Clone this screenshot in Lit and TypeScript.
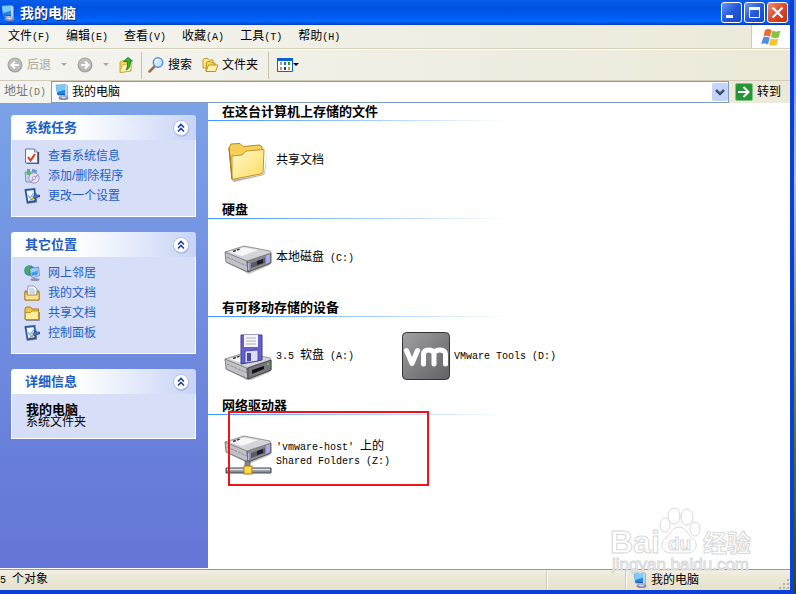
import { LitElement, html, svg, css, TemplateResult } from "lit";
import { customElement, property } from "lit/decorators.js";

/* Latin runs use a half-width monospace face next to the full-width CJK glyphs. */
const mixed = (s: string) =>
  s.split(/([\x20-\x7e]+)/).filter(Boolean).map((p) =>
    /^[\x20-\x7e]+$/.test(p) ? html`<span class="lat">${p}</span>` : p);

const mixedStyles = css`
  .lat {
    font-family: "Liberation Mono", monospace;
    font-size: 10px;
    white-space: pre;
  }
`;

const computer = svg`
  <ellipse cx="9.500" cy="14" rx="5" ry="2" fill="#8488ac"/>
  <path d="M5 13l4-1.500 5 1-4 2.500z" fill="#dcdff0" stroke="#8c90b4" stroke-width=".6"/>
  <path d="M2 1L11.500.5l2 1.200v10L10 12.500 3.500 11z" fill="#c4d0ea" stroke="#7c8cb8" stroke-width=".6"/>
  <path d="M2 1.200L11 .8v10.400L3.500 10.500z" fill="#2288e8"/>
  <path d="M2 1.200L11 .8v5L3 8z" fill="#78ccfc"/>
  <path d="M3 9.500l8 .5v1.200L3.500 10.500z" fill="#0e5cc0"/>`;

const control = svg`
  <path d="M3 15l9-1 .5-3" fill="none" stroke="#7c8498" stroke-width="1.500"/>
  <path d="M1.500 2l9-1 1 12-8 1.500z" fill="#f4f8ff" stroke="#28599c" stroke-width="1.800"/>
  <path d="M4 7l2 3 3.500-5" fill="none" stroke="#7fb0e0" stroke-width="1.300"/>
  <path d="M9 8.500l3-3 .5 2 3-.5v2l-3 .5-1 2z" fill="#3c78c4" stroke="#173a70" stroke-width=".7"/>
  <path d="M9.500 9l-4 3.500 4-1.500z" fill="#f0b030" stroke="#6a4c10" stroke-width=".4"/>`;

const drive = svg`
  <path d="M2 24L24 36 46 28 46 31 25 40 3 29z" fill="#000" opacity=".25"/>
  <path d="M1 18L23 27 24 38 2 28z" fill="#c2c2c6" stroke="#66666c" stroke-width=".8"/>
  <path d="M23 27L47 19V29L24 38z" fill="#8a8a92" stroke="#444444" stroke-width=".8"/>
  <path d="M27 29l14-5v5l-14 5z" fill="#5a5a64"/><path d="M33 27l6-2v4l-6 2z" fill="#202024"/>
  <path d="M42 21.500l4-1.500v8L42 30z" fill="#a9a9ee"/>
  <path d="M24.500 29v7" stroke="#b5b5f4" stroke-width="1.500"/>
  <path d="M1 18L20 12 46 17 47 19 23 27z" fill="#d4d4d8" stroke="#808086" stroke-width=".8"/>
  <path d="M5 18L20 13.500 34 16 18 22z" fill="#f6f6f6"/>
  <path d="M9 17.500l7-2.500" stroke="#333" stroke-width="1.500" stroke-dasharray="3 1"/>
  <path d="M3 23l20 9" stroke="#8e8e94" stroke-dasharray="3 1"/>`;

const icons: Record<string, { box: string; art: TemplateResult | unknown }> = {
  computer: { box: "0 0 16 16", art: computer },
  control: { box: "0 0 16 16", art: control },
  info: { box: "0 0 16 16", art: svg`
    <path d="M3 15.500h11.500V4" fill="none" stroke="#4a4a58" stroke-width="1.200"/>
    <path d="M1.500 1h9L13.500 4v11h-12z" fill="#f6faff" stroke="#5878b0"/>
    <path d="M10.500 1v3h3" fill="#bcd0ee" stroke="#5878b0" stroke-width=".7"/>
    <path d="M4 9l2.500 3.500L11 6" fill="none" stroke="#e0381c" stroke-width="2"/>` },
  programs: { box: "0 0 16 16", art: svg`
    <path d="M3 1h3v3H3zM8 1l5 1-1 4-4-1z" fill="#5d9ed8"/>
    <path d="M1 4h11v10H2z" fill="#c3d6ee" stroke="#6685b8" stroke-width=".8"/>
    <path d="M2 4h5v3H3z" fill="#60b868"/>
    <circle cx="10" cy="10" r="5.200" fill="#e5dff5" stroke="#8c8cb0" stroke-width=".8"/>
    <path d="M10 10l4-3M10 10l-3 4" stroke="#b098dc" stroke-width="1.500"/>
    <circle cx="10" cy="10" r="1.500" fill="#fff" stroke="#777799" stroke-width=".6"/>` },
  network: { box: "0 0 16 16", art: svg`
    <circle cx="5.500" cy="5.500" r="5.300" fill="#2f7ed8"/>
    <path d="M2 2c3-2 5-1 5 1L5 5l1 3-2 2C1 8 0 5 2 2z" fill="#43b04a"/>
    <ellipse cx="11" cy="14.500" rx="4.500" ry="1.500" fill="#8a8fae"/>
    <path d="M6 3.500L14.500 2l1 8.500L9 12.500 6.500 11z" fill="#dfe7f8" stroke="#52689c" stroke-width=".7"/>
    <path d="M6.800 4.200L13.800 3v7L7.500 11z" fill="#3a9cf0"/><path d="M6.800 4.200L13.800 3v2.500L7 8z" fill="#8cd2fc"/>` },
  documents: { box: "0 0 16 16", art: svg`
    <path d="M1 6h14v9H1z" fill="#f0c850" stroke="#a87818"/>
    <path d="M4 1h6l3 3v8H3z" fill="#fff" stroke="#6888b8" stroke-width=".8"/>
    <path d="M5 4h5M5 6h6M5 8h6" stroke="#78a0d0" stroke-width=".8"/>
    <path d="M1 7h2v3h10V7h2v8H1z" fill="#fbe592" stroke="#a87818" stroke-width=".9"/>` },
  folder: { box: "0 0 16 16", art: svg`
    <path d="M2 15.500h13.500V7" fill="none" stroke="#8c8c9c"/>
    <path d="M1 4l1-2h4.500L8 4h6.500v10.500H1z" fill="#f0c548" stroke="#a87a18"/>
    <path d="M1.500 7.500h5L8 6h6.500v8.500h-13z" fill="#fdec9a" stroke="#b08320" stroke-width=".8"/>` },
  folders: { box: "0 0 16 16", art: svg`
    <path d="M1 3l1-1.500h4L7.500 3H11v8H1z" fill="#fce88c" stroke="#c09020" stroke-width=".9"/>
    <path d="M4.500 6l1-1.500h3L10 6h3v8H4z" fill="#f8d860" stroke="#b88818" stroke-width=".9"/>
    <path d="M6.500 8H16l-2.500 6.500H4z" fill="#fff2a8" stroke="#b88818" stroke-width=".9"/>` },
  up: { box: "0 0 16 16", art: svg`
    <path d="M1 5l4-2 1.500 1.500H12V14L1 15.500z" fill="#f6d860" stroke="#c09828" stroke-width=".8"/>
    <path d="M3 8l10-2-1.500 8L1 15.500z" fill="#fff3ac" stroke="#c8a030" stroke-width=".7"/>
    <path d="M4.500 4.500L9 .5l4.500 3.500-2.300.3c.5 4-.8 7.700-4.200 8.700 1.500-2.500 1.800-5 1.300-8.300z" fill="#38b030" stroke="#15701a" stroke-width=".8"/>` },
  search: { box: "0 0 16 16", art: svg`
    <path d="M7 9L1.500 14.500" stroke="#a86848" stroke-width="2.500" stroke-linecap="round"/>
    <circle cx="10" cy="5.500" r="4.700" fill="#cbe8ff" stroke="#5a8edc" stroke-width="1.500"/>
    <path d="M7.500 5c.3-1.800 1.500-2.500 3-2.500" fill="none" stroke="#fff" stroke-width="1.500"/>` },
  back: { box: "0 0 16 16", art: svg`
    <circle cx="8" cy="8" r="7.500" fill="#a4a4a0"/><circle cx="8" cy="7.500" r="6.300" fill="#bcbcb8"/>
    <path d="M12 8H5M8 4.500L4.500 8 8 11.500" fill="none" stroke="#fff" stroke-width="2"/>` },
  forward: { box: "0 0 16 16", art: svg`
    <circle cx="8" cy="8" r="7.500" fill="#a4a4a0"/><circle cx="8" cy="7.500" r="6.300" fill="#bcbcb8"/>
    <path d="M4 8h7M8 4.500L11.500 8 8 11.500" fill="none" stroke="#fff" stroke-width="2"/>` },
  views: { box: "0 0 16 16", art: svg`
    <path d="M.5 1.500h15v13H.5z" fill="#fff" stroke="#0b62c8"/><path d="M0 1h16v3H0z" fill="#0b62c8"/>
    <path d="M3 5h2v3H3z" fill="#9098d0"/><path d="M7 5h2v3H7z" fill="#1078e0"/><path d="M11 5h2v3h-2z" fill="#18a020"/>
    <path d="M3 10h2v3H3z" fill="#f07850"/><path d="M7 10h2v3H7z" fill="#183898"/><path d="M11 10h2v3h-2z" fill="#d0a010"/>` },
  caret: { box: "0 0 6 4", art: svg`<path d="M0 0h6L3 3z" fill="currentColor"/>` },
  go: { box: "0 0 18 18", art: svg`
    <rect x=".5" y=".5" width="17" height="17" rx="1.500" fill="#259632" stroke="#7cc488"/>
    <path d="M3 9h10M8.500 4l5 5-5 5" fill="none" stroke="#fff" stroke-width="2"/>` },
  down: { box: "0 0 16 18", art: svg`
    <rect x="0" y="0" width="16" height="18" rx="2" fill="#c4d3fa"/>
    <path d="M4 7l4 4 4-4" fill="none" stroke="#3f5378" stroke-width="2.500"/>` },
  flag: { box: "0 0 20 18", art: svg`
    <path d="M4 2c2-1.500 4-1.500 6.500 0L9 9C6.500 7.500 4.500 7.500 2.500 8.500z" fill="#ee6a30"/>
    <path d="M11.500 2.500c2 1 5 1.500 8 0L17.500 9.500c-3 1-5 .8-7.500-.5z" fill="#86c440"/>
    <path d="M2.200 9.500c2-1 4-1 6.500.3L7 16.500C5 15.300 3 15 .3 16.200z" fill="#4a90e0"/>
    <path d="M9.800 10.200c2.500 1.300 4.800 1.300 7.500.4L15.500 17c-2.500 1.200-5 .8-7.500-.3z" fill="#f8c430"/>` },
  min: { box: "0 0 21 21", art: svg`<path d="M5 13h7v3H5z" fill="#fff"/>` },
  max: { box: "0 0 21 21", art: svg`<path d="M5.500 5.500h10v10h-10z" fill="none" stroke="#fff"/><path d="M5 5h11v3H5z" fill="#fff"/>` },
  close: { box: "0 0 21 21", art: svg`<path d="M5.500 5.500l10 10M15.500 5.500l-10 10" stroke="#fff" stroke-width="2.200"/>` },
  collapse: { box: "0 0 18 18", art: svg`
    <circle cx="9.500" cy="10" r="7.800" fill="#8e9cc8" opacity=".6"/>
    <circle cx="9" cy="9" r="7.500" fill="#fff" stroke="#b4c2e4"/>
    <path d="M6 8.500l3-3 3 3M6 12.500l3-3 3 3" fill="none" stroke="#1c409c" stroke-width="1.600"/>` },
  grip: { box: "0 0 12 12", art: svg`
    <path d="M9 1h2v2H9zM5 5h2v2H5zM9 5h2v2H9zM1 9h2v2H1zM5 9h2v2H5zM9 9h2v2H9z" fill="#b4b09c"/>` },
  bigFolder: { box: "0 0 48 48", art: svg`
    <path d="M8 44L41 38 43 15l-3 24-30 7z" fill="#000" opacity=".3"/>
    <defs><linearGradient id="f" x2="1" y2="1"><stop stop-color="#fffbd0"/><stop offset="1" stop-color="#ffd95a"/></linearGradient></defs>
    <path d="M5 12l2-4 9-.5 3 3 17-1.500 2 2V36L8 43z" fill="#f5cf58" stroke="#b48a20"/>
    <path d="M8 20l10-1 4-4 18-1.500-1 24L8 43.500z" fill="url(#f)" stroke="#c09428"/>
    <path d="M5 12l3 31" stroke="#a87c18" stroke-width="1.200"/>` },
  drive: { box: "0 0 48 48", art: drive },
  floppy: { box: "0 0 48 48", art: svg`
    <g transform="translate(0 9)">${drive}</g>
    <path d="M24 36L47 28V38L24 47z" fill="#77777e" stroke="#444444" stroke-width=".8"/>
    <path d="M28 38l12-4v3l-12 5z" fill="#111"/><path d="M43 31h2v2h-2z" fill="#40d850"/>
    <path d="M17 3h21v25l-21 4z" fill="#6860cc" stroke="#3c3890"/>
    <path d="M20 3h14v12H20z" fill="#f6f6f6"/><path d="M22 6h10M22 9h10M22 12h10" stroke="#b0b0b0"/>
    <path d="M21 19l13-1v11l-13 2z" fill="#dcdcf2" stroke="#443e98" stroke-width=".8"/><path d="M23 21h4v8l-4 .5z" fill="#4c46a4"/>` },
  vm: { box: "0 0 48 48", art: svg`
    <defs><linearGradient id="v" x2="1" y2="1"><stop stop-color="#a2a2a4"/><stop offset=".5" stop-color="#808082"/><stop offset="1" stop-color="#626264"/></linearGradient></defs>
    <rect x=".5" y=".5" width="47" height="47" rx="4" fill="url(#v)" stroke="#333"/>
    <path d="M4.500 18.500l5.500 13 5.500-13M21.500 32V22c0-5.500 10.500-5.500 10.500 0v10M32 22c0-5.500 11.500-5.500 11.500 0v10" fill="none" stroke="#fff" stroke-width="5" stroke-linecap="round" stroke-linejoin="round"/>` },
  netDrive: { box: "0 0 48 48", art: svg`
    <g transform="translate(0 -6)">${drive}</g>
    <path d="M21 31h5v8h-5z" fill="#808088" stroke="#50505a" stroke-width=".6"/>
    <path d="M2 38h45v5H2z" fill="#8a9298" stroke="#3c4650"/><path d="M3 39.500h43" stroke="#e0e8ec" stroke-width="1.500"/>
    <rect x="20" y="36" width="8" height="8" fill="#ffd848" stroke="#b07c10"/>` },
};

@customElement("xp-icon")
export class XpIcon extends LitElement {
  @property() name = "";
  static styles = css`
    :host { display: block; flex: none; width: 16px; height: 16px; }
    svg { display: block; width: 100%; height: 100%; }
  `;
  render() {
    const icon = icons[this.name];
    return html`<svg viewBox=${icon.box} aria-hidden="true">${icon.art}</svg>`;
  }
}

@customElement("task-panel")
export class TaskPanel extends LitElement {
  @property() heading = "";
  static styles = css`
    :host { display: block; }
    header {
      display: flex; align-items: center; justify-content: space-between;
      height: 25px; padding: 0 6px 0 14px; border-radius: 3px 3px 0 0;
      background: linear-gradient(90deg, #fff 35%, #c7d4f7);
    }
    h2 { margin: 0; font-size: 13px; line-height: 16px; color: #215dc6; }
    button { border: 0; padding: 0; background: none; }
    xp-icon { width: 18px; height: 18px; }
    .body { border: 1px solid #fff; border-top: 0; background: #d6dff7; }
  `;
  render() {
    return html`
      <header><h2>${this.heading}</h2><button aria-label="${this.heading}"><xp-icon name="collapse"></xp-icon></button></header>
      <div class="body"><slot></slot></div>`;
  }
}

const menus = ["文件(F)", "编辑(E)", "查看(V)", "收藏(A)", "工具(T)", "帮助(H)"];
const tasks = [["info", "查看系统信息"], ["programs", "添加/删除程序"], ["control", "更改一个设置"]];
const places = [["network", "网上邻居"], ["documents", "我的文档"], ["folder", "共享文档"], ["control", "控制面板"]];
const groups: { title: string; items: [string, string[]][] }[] = [
  { title: "在这台计算机上存储的文件", items: [["bigFolder", ["共享文档"]]] },
  { title: "硬盘", items: [["drive", ["本地磁盘 (C:)"]]] },
  { title: "有可移动存储的设备", items: [["floppy", ["3.5 软盘 (A:)"]], ["vm", ["VMware Tools (D:)"]]] },
  { title: "网络驱动器", items: [["netDrive", ["'vmware-host' 上的", "Shared Folders (Z:)"]]] },
];

@customElement("app-root")
export class AppRoot extends LitElement {
  static styles = [mixedStyles, css`
    :host {
      display: flex; min-height: 100vh; box-sizing: border-box; padding-right: 2px;
      background: linear-gradient(#5c90e0, #a8c4f0 30%, #4c7a34 75%, #24481c);
      font: 12px/16px "Liberation Sans", "Noto Sans CJK SC", sans-serif; color: #000;
    }
    button, input { font: inherit; color: inherit; border: 0; padding: 0; background: none; }
    .frame { position: relative; display: flex; flex: 1; min-width: 0; }
    .window {
      flex: 1; min-width: 0; display: flex; flex-direction: column;
      border: solid #0a3fd8; border-width: 0 4px 4px 0;
    }
    .title {
      display: flex; align-items: center; height: 25px; gap: 4px; flex: none; padding-right: 2px;
      background: linear-gradient(#0a5cea, #0052e0 30%, #0058ee 60%, #0068ff 85%, #003cc0);
      color: #fff;
    }
    .title h1 { flex: 1; margin: 0; font-size: 14px; line-height: 20px; text-shadow: 1px 1px #0a2a80; }
    .controls { display: flex; gap: 2px; }
    .controls button {
      width: 21px; height: 21px; box-sizing: border-box; border: 1px solid #fff; border-radius: 3px;
      background: linear-gradient(135deg, #6c98f4, #2458dc 50%, #1a48c8);
      display: grid; place-content: center;
    }
    .controls .close { background: linear-gradient(135deg, #f09070, #de4a26 50%, #c03010); }
    .controls xp-icon { width: 21px; height: 21px; }
    .menu {
      display: flex; height: 23px; flex: none; justify-content: space-between;
      background: linear-gradient(90deg, #f4f4f0, #ece9d8); border-bottom: 1px solid #d6d0b8;
    }
    .menu nav { display: flex; gap: 16px; padding-left: 8px; }
    .brand { display: grid; place-items: center; width: 38px; background: #fff; border-left: 1px solid #d0ccb8; }
    .brand xp-icon { width: 20px; height: 18px; }
    .tools {
      display: flex; align-items: center; height: 30px; flex: none; padding-left: 7px;
      background: linear-gradient(90deg, #f4f4f0, #ece9d8);
      border-top: 1px solid #fff; border-bottom: 1px solid #d0ccb8;
    }
    .tools button { display: flex; align-items: center; gap: 4px; }
    .tools xp-icon.caret { width: 6px; height: 4px; }
    .tools .views { gap: 0; }
    .off { color: #aca899; }
    .nav { margin-right: 10px; }
    .drop { margin-right: 10px; }
    .sep { width: 1px; height: 27px; margin: 0 6px; background: #c8c2a8; }
    .wide { margin: 0 8px 0 10px; }
    .address { display: flex; height: 22px; flex: none; background: linear-gradient(90deg, #f4f4f0, #ece9d8); }
    .address label { width: 47px; padding-left: 4px; line-height: 20px; color: #77756c; }
    .combo {
      flex: 1; min-width: 0; display: flex; align-items: center; gap: 2px; box-sizing: border-box;
      border: 1px solid #7f9db9; background: #fff; padding-left: 2px;
    }
    .combo input { flex: 1; min-width: 0; outline: 0; }
    .combo xp-icon.down { height: 18px; }
    .go { display: flex; align-items: center; gap: 4px; margin: 0 9px 0 6px; }
    .go xp-icon { width: 18px; height: 18px; }
    .content { flex: 1; display: flex; background: #fff; padding-bottom: 1px; }
    aside {
      width: 208px; flex: none; box-sizing: border-box; padding: 12px 12px 12px 11px;
      display: flex; flex-direction: column; gap: 15px;
      background: linear-gradient(#7ba2e7, #6375d6);
    }
    ul { list-style: none; margin: 0; padding: 6px 12px 10px; }
    aside a { display: flex; align-items: center; gap: 8px; height: 20px; color: #215dc6; text-decoration: none; }
    .details { margin: 0; padding: 9px 14px; line-height: 13px; }
    .details strong { display: block; font-size: 13px; }
    main { flex: 1; min-width: 0; position: relative; }
    section { height: 98px; }
    section h2 {
      margin: 0; height: 17px; padding-left: 14px; font-size: 13px; line-height: 17px;
      border-bottom: 1px solid; border-image: linear-gradient(90deg, #3c94ff, #fff 300px) 1;
    }
    .grid { display: grid; grid-template-columns: repeat(auto-fill, 178px); padding: 15px 0 0 16px; }
    .item { display: flex; align-items: center; gap: 4px; line-height: 13px; white-space: nowrap; text-align: left; }
    .item xp-icon { width: 48px; height: 48px; }
    .line { display: block; }
    .mark {
      position: absolute; left: 20px; top: 308px; width: 201px; height: 75px;
      box-sizing: border-box; border: 2px solid #f01414; pointer-events: none;
    }
    .status {
      display: flex; height: 20px; flex: none; border-top: 1px solid #9c9a8c;
      background: linear-gradient(#f2f0e4, #ece9d8 30%, #e6e2cc);
    }
    .status > div { display: flex; align-items: center; gap: 3px; box-sizing: border-box; }
    .count { flex: 1; }
    .blank, .zone { border-left: 1px solid #fff; box-shadow: -1px 0 #d0ccb8; }
    .blank { width: 79px; }
    .zone { width: 164px; padding-left: 5px; }
    .zone span { flex: 1; }
    .status xp-icon.grip { width: 12px; height: 12px; align-self: flex-end; }
    .watermark { position: absolute; right: 34px; bottom: 14px; width: 148px; height: 76px; pointer-events: none; overflow: visible; }
    .outline { fill: #fff; fill-opacity: 0.7; stroke: #d8d8d8; stroke-width: 1px; font-family: "Liberation Sans", "Noto Sans CJK SC", sans-serif; }
    .word { font-size: 32px; font-weight: bold; }
    .paw { font-size: 19px; font-weight: bold; }
    .han { font-size: 24px; font-weight: bold; }
    .url { font-size: 17px; }
  `];

  private links(list: string[][]) {
    return html`<ul>${list.map(([icon, label]) => html`
      <li><a href="#"><xp-icon name=${icon}></xp-icon>${label}</a></li>`)}</ul>`;
  }

  render() {
    return html`
      <div class="frame">
      <div class="window">
        <div class="title">
          <xp-icon name="computer"></xp-icon>
          <h1>我的电脑</h1>
          <div class="controls">
            <button aria-label="最小化"><xp-icon name="min"></xp-icon></button>
            <button aria-label="最大化"><xp-icon name="max"></xp-icon></button>
            <button class="close" aria-label="关闭"><xp-icon name="close"></xp-icon></button>
          </div>
        </div>
        <div class="menu">
          <nav>${menus.map((m) => html`<button>${mixed(m)}</button>`)}</nav>
          <div class="brand"><xp-icon name="flag"></xp-icon></div>
        </div>
        <div class="tools">
          <button class="off nav"><xp-icon name="back"></xp-icon>后退</button>
          <button class="off drop" aria-label="后退列表"><xp-icon class="caret" name="caret"></xp-icon></button>
          <button class="off nav" aria-label="前进"><xp-icon name="forward"></xp-icon></button>
          <button class="off drop" aria-label="前进列表"><xp-icon class="caret" name="caret"></xp-icon></button>
          <button aria-label="向上"><xp-icon name="up"></xp-icon></button>
          <span class="sep"></span>
          <button class="nav"><xp-icon name="search"></xp-icon>搜索</button>
          <button><xp-icon name="folders"></xp-icon>文件夹</button>
          <span class="sep wide"></span>
          <button class="views" aria-label="查看"><xp-icon name="views"></xp-icon><xp-icon class="caret" name="caret"></xp-icon></button>
        </div>
        <div class="address">
          <label for="addr">${mixed("地址(D)")}</label>
          <div class="combo">
            <xp-icon name="computer"></xp-icon>
            <input id="addr" .value=${"我的电脑"}>
            <button aria-label="地址列表"><xp-icon class="down" name="down"></xp-icon></button>
          </div>
          <button class="go"><xp-icon name="go"></xp-icon>转到</button>
        </div>
        <div class="content">
          <aside>
            <task-panel heading="系统任务">${this.links(tasks)}</task-panel>
            <task-panel heading="其它位置">${this.links(places)}</task-panel>
            <task-panel heading="详细信息"><p class="details"><strong>我的电脑</strong>系统文件夹</p></task-panel>
          </aside>
          <main>
            ${groups.map((g) => html`
              <section>
                <h2>${g.title}</h2>
                <div class="grid">${g.items.map(([icon, lines]) => html`
                  <button class="item"><xp-icon name=${icon}></xp-icon>
                    <span>${lines.map((l) => html`<span class="line">${mixed(l)}</span>`)}</span>
                  </button>`)}</div>
              </section>`)}
            <div class="mark"></div>
          </main>
        </div>
        <div class="status">
          <div class="count"><span>${mixed("5 个对象")}</span></div>
          <div class="blank"></div>
          <div class="zone"><xp-icon name="computer"></xp-icon><span>我的电脑</span><xp-icon class="grip" name="grip"></xp-icon></div>
        </div>
      </div>
      <svg class="watermark" viewBox="0 0 148 76">
        <g class="outline">
          <ellipse cx="53" cy="21" rx="5" ry="7"/><ellipse cx="62" cy="12" rx="6" ry="8"/>
          <ellipse cx="75" cy="13" rx="6" ry="8"/><ellipse cx="83" cy="25" rx="5" ry="7"/>
          <path d="M67 23c6 0 8 6 13 11 6 4 6 13-3 15H57c-9-2-9-11-3-15 5-5 7-11 13-11z"/>
          <text class="word" x="-2" y="49">Bai</text>
          <text class="paw" x="56" y="46">du</text>
          <text class="han" x="91" y="48">经验</text>
          <text class="url" x="0" y="66">jingyan.baidu.com</text>
        </g>
      </svg>
      </div>`;
  }
}
